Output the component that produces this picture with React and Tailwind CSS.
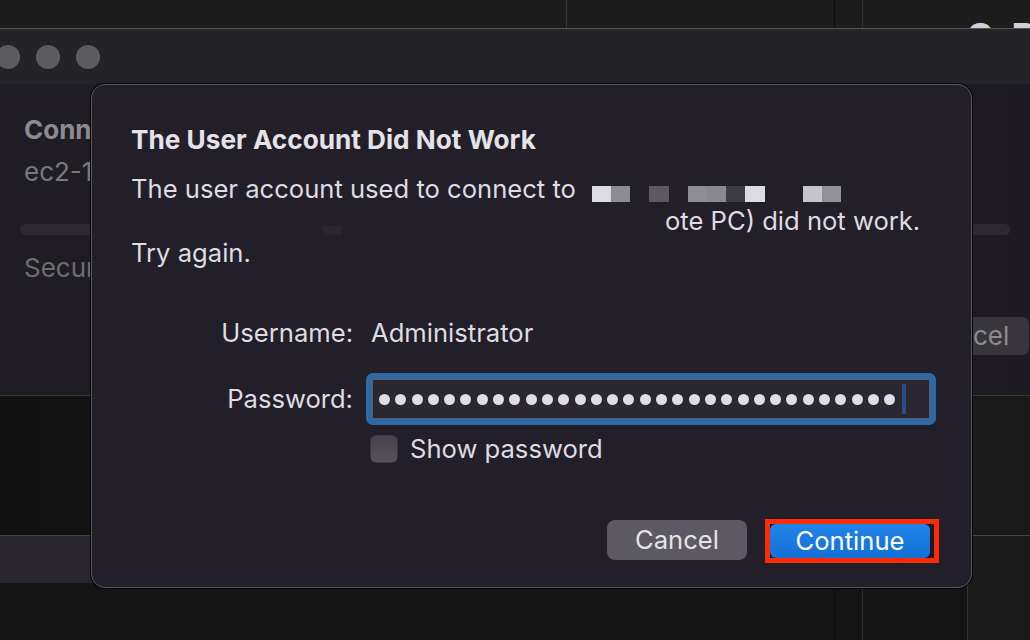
import React from "react";

const blocks = [
  { gap: 0, w: 19, c: "bg-[#dcdbe0]" },
  { gap: 0, w: 19, c: "bg-[#8e8c93]" },
  { gap: 19, w: 20, c: "bg-[#5d5962]" },
  { gap: 19, w: 19, c: "bg-[#8f8d94]" },
  { gap: 0, w: 19, c: "bg-[#8a888f]" },
  { gap: 0, w: 19, c: "bg-[#3f3b45]" },
  { gap: 0, w: 20, c: "bg-[#dcdbe0]" },
  { gap: 38, w: 19, c: "bg-[#c6c5ca]" },
  { gap: 0, w: 19, c: "bg-[#939198]" },
];

function TrafficLights() {
  return (
    <div className="flex items-center gap-[16px] ml-[-4px]">
      <span className="w-[24px] h-[24px] rounded-full bg-[#5d5c61]" />
      <span className="w-[24px] h-[24px] rounded-full bg-[#5d5c61]" />
      <span className="w-[24px] h-[24px] rounded-full bg-[#5d5c61]" />
    </div>
  );
}

function Backdrop() {
  return (
    <div className="flex flex-col h-full">
      {/* top strip of the window behind */}
      <div className="flex h-[28px] bg-[#1c1c1c] shrink-0">
        <div className="w-[567px] border-r border-[#373737]" />
        <div className="w-[268px] border-r border-[#0d0d0d]" />
        <div className="w-[28px] border-r border-[#333333]" />
        <div className="flex-1 overflow-hidden">
          <div className="flex gap-[18px] pl-[104px] pt-[18px] text-[40px] font-bold leading-none text-[#cfcfd2]">
            <span>S</span>
            <span>P</span>
          </div>
        </div>
      </div>

      {/* app window */}
      <div className="border-t border-[#56555a] shrink-0">
        <div className="h-[55px] bg-[#242327] flex items-center">
          <TrafficLights />
        </div>
        <div className="h-[311px] bg-gradient-to-r from-[#1f1d23] to-[#1d1b21] flex flex-col text-[26px] leading-[32px]">
          <div className="pl-[24px] whitespace-nowrap">
            <div className="mt-[30px] font-bold text-[#8c8b8f]">Conn</div>
            <div className="mt-[10px] text-[#79787d]">ec2-1</div>
          </div>
          <div className="mt-[36px] ml-[20px] mr-[20px] h-[11px] rounded-full bg-[#2c2a30]" />
          <div className="pl-[24px] whitespace-nowrap">
            <div className="mt-[17px] text-[#6e6d72]">Secur</div>
          </div>
          <div className="mt-[33px] self-end mr-[1px] w-[57px] h-[38px] rounded-r-[7px] bg-[#38363c] text-[#8b8a8e] flex items-center pl-[1px]">
            cel
          </div>
        </div>
        <div className="h-[140px] border-t border-[#3a393d] bg-gradient-to-r from-[#121212] to-[#1a1a1a]" />
        <div className="h-[48px] border-t border-[#444347] flex">
          <div className="w-[560px] bg-[#29252f]" />
          <div className="flex-1 bg-[#1a1a1a]" />
        </div>
      </div>

      {/* desktop below */}
      <div className="flex-1 flex bg-[#141414]">
        <div className="w-[835px] border-r border-[#0b0b0b]" />
        <div className="w-[28px] border-r border-[#2f2f2f]" />
        <div className="w-[105px] border-r border-[#333333]" />
        <div className="flex-1 bg-[#1a1a1a]" />
      </div>
    </div>
  );
}

function PasswordField() {
  return (
    <div className="w-[570px] h-[52px] rounded-[7px] border-[6px] border-[#2d6aa5] bg-[#2d6aa5]">
      <div className="h-full border border-[#5e5b63] bg-[#2b2731] flex items-center pl-[6px] gap-[5.3px]">
        {Array.from({ length: 32 }).map((_, i) => (
          <span key={i} className="w-[11px] h-[11px] rounded-full bg-[#dedde2] shrink-0" />
        ))}
        <span className="ml-[1px] w-[4px] h-[30px] bg-[#2b4c86]" />
      </div>
    </div>
  );
}

function AlertDialog() {
  return (
    <div className="absolute left-[91px] top-[84px] w-[881px] h-[504px] rounded-[14px] border border-[#5a575f] bg-[#231f29] shadow-[0_0_0_1px_rgba(0,0,0,0.85)] flex flex-col pl-[39px] pr-[32px] pt-[39px] pb-[24px] text-[25.6px] leading-[32px]">
      <h1 className="font-bold text-[26.2px] text-[#e4e3e7]">The User Account Did Not Work</h1>

      <div className="mt-[17px] text-[#dddce1]">
        <div className="flex items-start">
          <span className="w-[461px] whitespace-nowrap shrink-0">The user account used to connect to</span>
          {blocks.map((b, i) => (
            <span
              key={i}
              className={`mt-[13px] h-[16px] shrink-0 ${b.c}`}
              style={{ width: b.w, marginLeft: b.gap }}
            />
          ))}
        </div>
        <div className="flex items-start">
          <span className="w-[192px] shrink-0" />
          <span className="mt-[21px] w-[19px] h-[9px] bg-[#29262f] shrink-0" />
          <span className="w-[323px] shrink-0" />
          <span className="whitespace-nowrap">ote PC) did not work.</span>
        </div>
        <div>Try again.</div>
      </div>

      <div className="mt-[48px] text-[#dddce1]">
        <div className="flex items-center h-[32px]">
          <span className="w-[222px] text-right">Username:</span>
          <span className="ml-[18px]">Administrator</span>
        </div>
        <div className="flex items-center mt-[24px]">
          <span className="w-[222px] text-right">Password:</span>
          <div className="ml-[13px]">
            <PasswordField />
          </div>
        </div>
        <div className="flex items-center h-[32px] mt-[8px]">
          <span className="ml-[239px] w-[28px] h-[28px] rounded-[6px] bg-gradient-to-b from-[#47434d] to-[#57535c] border border-[#3c3941]" />
          <span className="ml-[12px]">Show password</span>
        </div>
      </div>

      <div className="mt-auto flex justify-end items-center gap-[18px]">
        <button className="w-[140px] h-[40px] mb-[3px] rounded-[8px] bg-[#5c5962] text-[#e4e3e7]">
          Cancel
        </button>
        <div className="w-[174px] h-[44px] border-[5px] border-[#fc2a07] bg-[#1c1920] flex">
          <button className="h-full w-[160px] rounded-[6px] bg-gradient-to-b from-[#1f84ea] to-[#146fd6] text-white flex items-center justify-center">
            Continue
          </button>
        </div>
      </div>
    </div>
  );
}

export default function App() {
  return (
    <div className="relative w-[1030px] h-[640px] overflow-hidden bg-[#141414] font-['Inter','Noto_Sans',sans-serif]">
      <Backdrop />
      <AlertDialog />
    </div>
  );
}
